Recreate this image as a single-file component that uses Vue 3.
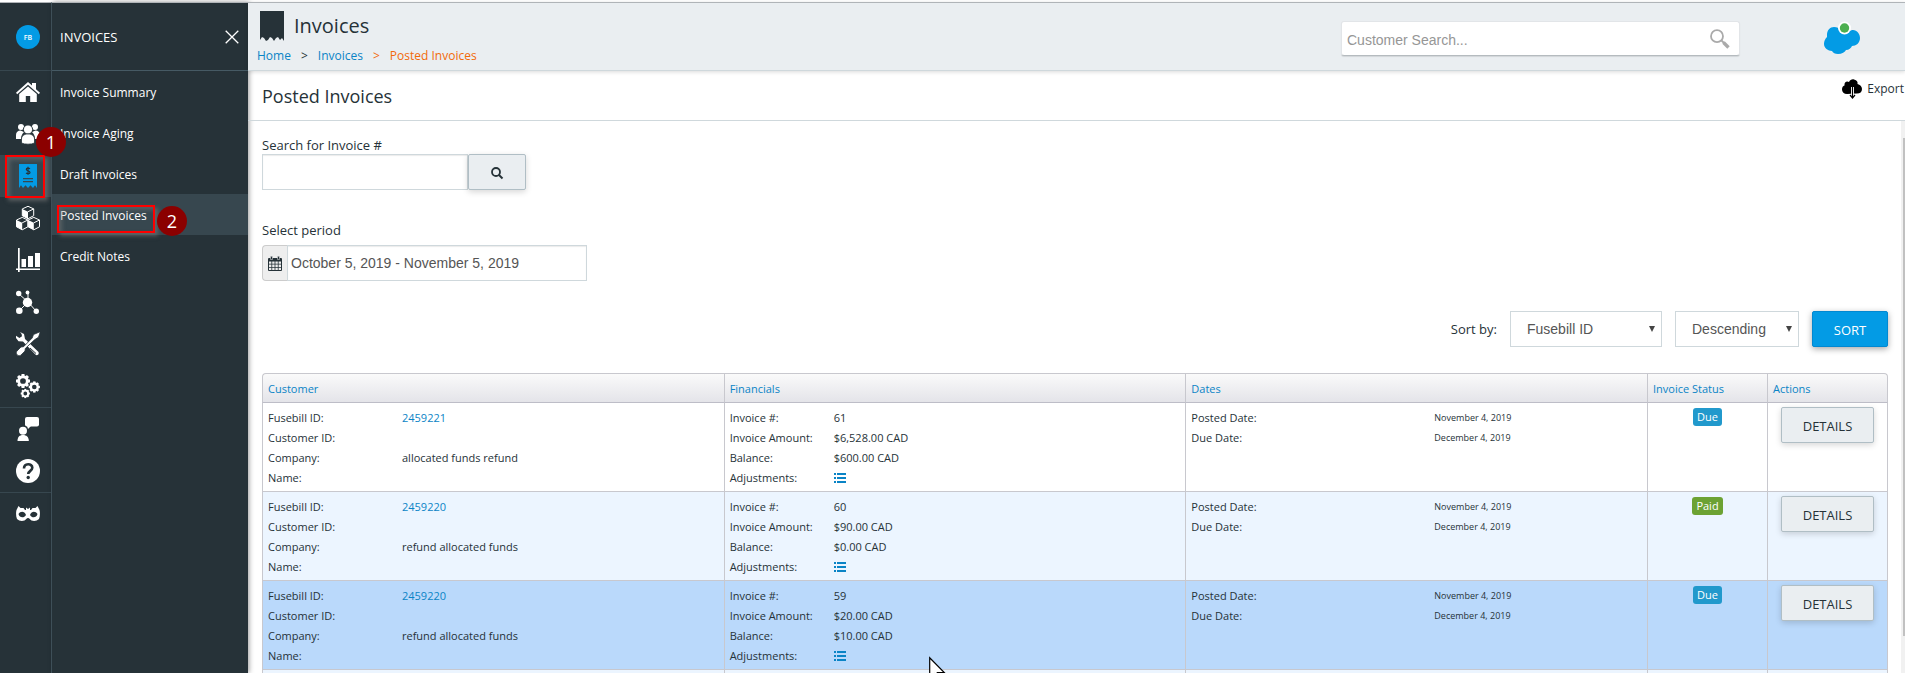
<template>
  <div class="app">
    <nav class="rail" aria-label="Main">
      <div class="rail-head"><span class="avatar">FB</span></div>
      <a
        v-for="item in railItems"
        :key="item.id"
        href="#"
        :class="['rail-item', { active: item.id === 'invoices', ruled: item.ruled }]"
        :title="item.label"
      >
        <svg width="24" height="24" viewBox="0 0 24 24" fill="#fff" v-html="item.icon" />
        <template v-if="item.id === 'invoices'">
          <span class="mark-box mark-box-rail" />
          <span class="mark-dot mark-dot-rail">1</span>
        </template>
      </a>
    </nav>

    <aside class="submenu">
      <div class="submenu-head">
        <span>INVOICES</span>
        <button class="close-btn" aria-label="Close menu">
          <svg width="14" height="14" viewBox="0 0 14 14" stroke="#fff" stroke-width="1.3"><path d="M.7.7l12.6 12.6M13.3.7L.7 13.3" /></svg>
        </button>
      </div>
      <a v-for="link in links" :key="link" href="#" :class="['submenu-item', { active: link === 'Posted Invoices' }]">
        {{ link }}
        <template v-if="link === 'Posted Invoices'">
          <span class="mark-box mark-box-menu" />
          <span class="mark-dot mark-dot-menu">2</span>
        </template>
      </a>
    </aside>

    <main class="main">
      <header class="topbar">
        <div>
          <div class="title">
            <svg width="24" height="31" viewBox="0 0 24 31" fill="#263238"><path d="M0 0h24v30l-2-3-2 2-2-3-2 1-2 3-2-3-2-1-2 3-2 1-2-3-2-1-2 3z" /></svg>
            <h1>Invoices</h1>
          </div>
          <div class="crumbs">
            <a href="#">Home</a><span>&gt;</span><a href="#">Invoices</a><span class="here">&gt;</span><span class="here">Posted Invoices</span>
          </div>
        </div>
        <div class="topbar-right">
          <div class="customer-search">
            <input type="text" placeholder="Customer Search..." aria-label="Customer search" />
            <svg width="20" height="20" viewBox="0 0 20 20" fill="none" stroke="#aaa"><circle cx="7" cy="7.2" r="6" stroke-width="1.8" /><path d="M11.5 11.5l2.5 2.5" stroke-width="1.8" /><path d="M13.5 13.5l5 5" stroke-width="3.4" /></svg>
          </div>
          <svg class="cloud" width="36" height="36" viewBox="0 0 36 36">
            <path fill="#039be5" d="M3 14c0-5 3-8 7-8 3 0 5 1 6 3 2-2 4-2 6-2 2 0 3 1 4 3 1-1 2-1 3-1 4 0 7 4 7 8 0 5-4 8-8 8-1 2-3 4-6 4-1 2-4 4-8 4-3 0-5-1-6-3C4 30 0 27 0 23c0-3 1-5 3-7z" />
            <circle cx="20.500" cy="7" r="6.500" fill="#fff" /><circle cx="20.500" cy="7" r="4.700" fill="#4caf50" />
          </svg>
        </div>
      </header>

      <div class="page-head">
        <h2>Posted Invoices</h2>
        <a href="#" class="export">
          <svg width="20" height="20" viewBox="0 0 20 20">
            <path d="M5 15C2 15 0 13 0 10.500 0 8 1 7 2.500 6.500 2 3 5 1.500 7 3c1-2 3-3 5-2.500 3 .5 4 2.500 3.500 4.500C18 5.500 20 7.500 20 10c0 3-2 4.500-5 4.500z" />
            <path d="M10.500 8v10M8 15.500l2.500 2.500 2.500-2.500" fill="none" stroke="#fff" stroke-width="3" />
            <path d="M10.500 8v10.500M8 16l2.500 3 2.500-3" fill="none" stroke="#000" stroke-width="1.200" />
          </svg>
          Export
        </a>
      </div>

      <div class="body">
        <div class="content">
          <label for="invoice-number">Search for Invoice #</label>
          <div class="group">
            <input id="invoice-number" class="number-input" type="text" />
            <button class="btn search-btn" aria-label="Search">
              <svg width="12" height="12" viewBox="0 0 12 12" fill="none" stroke="#263238"><circle cx="5" cy="5" r="4" stroke-width="1.800" /><path d="M8 8l3.500 3.500" stroke-width="2" /></svg>
            </button>
          </div>

          <label class="period-label" for="period">Select period</label>
          <div class="group">
            <span class="addon">
              <svg width="14" height="15" viewBox="0 0 14 15">
                <path fill="#263238" d="M0 3a1 1 0 0 1 1-1h12a1 1 0 0 1 1 1v11a1 1 0 0 1-1 1H1a1 1 0 0 1-1-1z" />
                <path fill="#eee" d="M1 5.500h2.400v2.300H1zM4.200 5.500h2.400v2.300H4.200zM7.400 5.500h2.400v2.300H7.400zM10.600 5.500H13v2.300h-2.400zM1 8.600h2.400v2.300H1zM4.200 8.600h2.400v2.300H4.200zM7.400 8.600h2.400v2.300H7.400zM10.600 8.600H13v2.300h-2.400zM1 11.700h2.400V14H1zM4.200 11.700h2.400V14H4.200zM7.400 11.700h2.400V14H7.400zM10.600 11.700H13V14h-2.400z" />
                <path fill="#263238" stroke="#eee" stroke-width=".5" d="M2.500.3h2v3.200h-2zM9.500.3h2v3.200h-2z" />
              </svg>
            </span>
            <input id="period" class="period-input" type="text" value="October 5, 2019 - November 5, 2019" />
          </div>

          <div class="sort-row">
            <label for="sort-field">Sort by:</label>
            <div class="select select-field">
              <select id="sort-field"><option>Fusebill ID</option></select>
              <svg width="6" height="6" viewBox="0 0 6 6" fill="#444"><path d="M0 0h6L3 6z" /></svg>
            </div>
            <div class="select select-order">
              <select aria-label="Sort order"><option>Descending</option></select>
              <svg width="6" height="6" viewBox="0 0 6 6" fill="#444"><path d="M0 0h6L3 6z" /></svg>
            </div>
            <button class="btn sort-btn">SORT</button>
          </div>

          <table class="invoices">
            <colgroup>
              <col /><col /><col /><col class="col-status" /><col class="col-actions" />
            </colgroup>
            <thead>
              <tr>
                <th v-for="h in headings" :key="h"><a href="#">{{ h }}</a></th>
              </tr>
            </thead>
            <tbody>
              <tr v-for="row in rows" :key="row.number" :class="row.tone">
                <td>
                  <dl class="customer">
                    <dt>Fusebill ID:</dt><dd><a href="#">{{ row.fusebillId }}</a></dd>
                    <dt>Customer ID:</dt><dd />
                    <dt>Company:</dt><dd>{{ row.company }}</dd>
                    <dt>Name:</dt><dd />
                  </dl>
                </td>
                <td>
                  <dl class="financials">
                    <dt>Invoice #:</dt><dd>{{ row.number }}</dd>
                    <dt>Invoice Amount:</dt><dd>{{ row.amount }}</dd>
                    <dt>Balance:</dt><dd>{{ row.balance }}</dd>
                    <dt>Adjustments:</dt>
                    <dd>
                      <a href="#" class="list-link" aria-label="Adjustments">
                        <svg width="12" height="10" viewBox="0 0 12 10" fill="#0a84c6"><path d="M0 0h2v2H0zM3 0h9v2H3zM0 4h2v2H0zM3 4h9v2H3zM0 8h2v2H0zM3 8h9v2H3z" /></svg>
                      </a>
                    </dd>
                  </dl>
                </td>
                <td>
                  <dl class="dates">
                    <dt>Posted Date:</dt><dd>November 4, 2019</dd>
                    <dt>Due Date:</dt><dd>December 4, 2019</dd>
                  </dl>
                </td>
                <td class="center"><span :class="['badge', row.status.toLowerCase()]">{{ row.status }}</span></td>
                <td class="center"><button class="btn details-btn">DETAILS</button></td>
              </tr>
              <tr class="alt next-row">
                <td v-for="n in 5" :key="n" />
              </tr>
            </tbody>
          </table>
        </div>
        <div class="scrollbar"><div class="thumb" /></div>
      </div>
    </main>

    <svg class="cursor" width="17" height="26" viewBox="0 0 17 26"><path d="M.7.8v20.500l4.700-4.500 3.200 7.500 3-1.300-3.200-7.300h7z" fill="#fff" stroke="#000" stroke-width="1.200" /></svg>
  </div>
</template>

<script setup>
const links = ['Invoice Summary', 'Invoice Aging', 'Draft Invoices', 'Posted Invoices', 'Credit Notes']
const headings = ['Customer', 'Financials', 'Dates', 'Invoice Status', 'Actions']

const rows = [
  { fusebillId: '2459221', company: 'allocated funds refund', number: 61, amount: '$6,528.00 CAD', balance: '$600.00 CAD', status: 'Due', tone: '' },
  { fusebillId: '2459220', company: 'refund allocated funds', number: 60, amount: '$90.00 CAD', balance: '$0.00 CAD', status: 'Paid', tone: 'alt' },
  { fusebillId: '2459220', company: 'refund allocated funds', number: 59, amount: '$20.00 CAD', balance: '$10.00 CAD', status: 'Due', tone: 'hovered' },
]

// ring of square teeth around a hollow hub
const gear = (x, y, r, w) => {
  let teeth = ''
  for (let i = 0; i < 8; i++) {
    teeth += `<rect x="${x - w / 2}" y="${y - r}" width="${w}" height="${w}" transform="rotate(${i * 45} ${x} ${y})"/>`
  }
  return `${teeth}<circle cx="${x}" cy="${y}" r="${r * 0.62}" fill="none" stroke="#fff" stroke-width="${r * 0.42}"/>`
}

// outlined box with a solid left face
const cube = (x, y) =>
  `<path d="M${x} ${y}l5.700 2.600v6.800l-5.700 3-5.700-3v-6.800z" fill="#263238" stroke="#fff" stroke-width="1"/><path d="M${x - 5.7} ${y + 2.6}l5.700 2.800v7l-5.700-3z"/><path d="M${x} ${y + 5.4}l5.700-2.800" stroke="#fff" stroke-width="1"/>`

const railItems = [
  { id: 'home', label: 'Home', icon: '<path d="M12 2l4 3.600V3h4v6.200l4 3.600-1.200 1.400L12 4.800 1.200 14.200 0 12.800z"/><path d="M3.200 14L12 6.400l8.800 7.600v8h-6.600v-6H9.800v6H3.200z"/>' },
  { id: 'customers', label: 'Customers', icon: '<circle cx="5" cy="5" r="3"/><circle cx="19" cy="5" r="3"/><path d="M0 17v-4c0-3 2-4.500 4.500-4.500L8 10c-2 2-3 4-3 7z"/><path d="M24 17v-4c0-3-2-4.500-4.500-4.500L16 10c2 2 3 4 3 7z"/><circle cx="12" cy="7.500" r="4.600" stroke="#263238"/><path d="M5.500 21v-4c0-3 2.500-5 6.500-5s6.500 2 6.500 5v4c-3 1.600-10 1.600-13 0z" stroke="#263238" stroke-width=".8"/>' },
  { id: 'invoices', label: 'Invoices', icon: '<path d="M3 0h18v24l-2-2.800-2 2.800-2.500-2.800L12 24l-2.500-2.800L7 24l-2-2.800L3 24z" fill="#039be5"/><path d="M14 4.700C13 3.800 10.300 3.700 10.300 5.400c0 1.700 3.700 1.100 3.700 3 0 1.600-2.700 1.700-4 .7M12 2.800v8" fill="none" stroke="#263238" stroke-width="1.200"/><path d="M7 14h10v1.300H7zM7 17h10v1.300H7z" fill="#37474f"/>' },
  { id: 'products', label: 'Products', icon: cube(12, 0.3) + cube(6.2, 11.4) + cube(17.8, 11.4) },
  { id: 'reports', label: 'Reports', icon: '<path d="M2 0h1.700v20.500H24V22H3.700v2H2v-2H0v-1.500h2z"/><path d="M5.500 11h4.500v8H5.500zM12 8h5v11h-5zM19 5h5v14h-5z"/>' },
  { id: 'network', label: 'Integrations', icon: '<g stroke="#fff" stroke-width="1"><path d="M3 4l9 8M12 3l0 9M3 21l9-9M20 21l-8-9"/></g><circle cx="2.700" cy="3.500" r="2.700"/><circle cx="11.500" cy="2.500" r="1.900"/><circle cx="11.500" cy="12.500" r="4.700"/><circle cx="3.300" cy="20.700" r="3.300"/><circle cx="20.300" cy="21.300" r="2.700"/>' },
  { id: 'tools', label: 'Tools', icon: '<path d="M4 0l4 2 1 5 13 12.500c2 2-.5 5-2.600 3L7 9.500 2.500 9.300 0 6V3.700L3.400 6 6 4.300 5.600 2z"/><path d="M14 16l6 5.500" stroke="#263238" stroke-width="1"/><path d="M23.500 0l.5.700-1.500 4.500-4 2.600L9.300 16.500 9 19l-4.200 4.200C2.500 25-1 22 .8 19.200L5 15l2.600-.3L16.200 6l1.300-3.500z" stroke="#263238" stroke-width=".8"/>' },
  { id: 'settings', label: 'Settings', icon: gear(7, 7, 7, 3) + gear(18.3, 13, 5.6, 2.4) + gear(9.3, 19.5, 4.6, 2), ruled: true },
  { id: 'contact', label: 'Contact', icon: '<rect x="9" y="0" width="14" height="9.500" rx="2"/><path d="M11 9h4l-3 3z"/><circle cx="7" cy="13.800" r="4"/><path d="M1.500 24c0-4 2-6 5.500-6s5.800 2 5.800 6z"/>' },
  { id: 'help', label: 'Help', icon: '<circle cx="12" cy="12" r="12"/><path d="M8 9.500C8 4 16.300 4 16.300 8.800c0 3-4.100 3.200-4.100 6.300" fill="none" stroke="#263238" stroke-width="2.600"/><circle cx="12.200" cy="18.500" r="1.700" fill="#263238"/>', ruled: true },
  { id: 'mask', label: 'Incognito', icon: '<path d="M2.500 4l2 2h3l1.500 2h1V5.500l2 1.500 2-1.500V8h1l1.500-2h3l2-2 2 4c.7 3 .6 6-.5 9-2 2-5 2.300-7.500 1.500C14 17.800 13.500 16 12 16s-2 1.800-3.500 2.500C6 19.300 3 19 1 17-.1 14-.2 11 .5 8z"/><path d="M2.500 12c2-3 6-3 7.500 1-2 3.400-6.500 3-7.500-1zM21.500 12c-2-3-6-3-7.500 1 2 3.400 6.500 3 7.500-1z" fill="#263238"/>' },
]
</script>

<style scoped>
.app {
  position: relative;
  display: flex;
  height: 100vh;
  box-sizing: border-box;
  padding-top: 2px;
  overflow: hidden;
  background: #fff;
  color: #263238;
  font-family: "Open Sans", "Noto Sans", sans-serif;
  font-size: 13px;
}
.app *,
.app *::before {
  box-sizing: border-box;
}
a {
  color: #0a84c6;
  text-decoration: none;
}
h1,
h2,
dl,
dd {
  margin: 0;
}
button,
input,
select {
  margin: 0;
  font-family: inherit;
}
svg {
  display: block;
  overflow: visible;
}

.rail {
  width: 52px;
  flex: none;
  background: #263238;
  border-top: 1px solid #b0b4b8;
  border-right: 1px solid #465a64;
}
.rail-head,
.submenu-head {
  height: 68px;
  border-bottom: 1px solid #37474f;
}
.rail-head {
  display: flex;
  align-items: center;
  padding-left: 16px;
}
.avatar {
  width: 24px;
  height: 24px;
  border-radius: 50%;
  background: #039be5;
  color: #fff;
  font-size: 7px;
  font-weight: 600;
  line-height: 26px;
  text-align: center;
}
.rail-item {
  position: relative;
  display: flex;
  align-items: center;
  height: 42px;
  padding-left: 16px;
}
.rail-item.active,
.submenu-item.active {
  background: #37474f;
}
.rail-item.ruled {
  height: 43px;
  border-bottom: 1px solid #37474f;
}

.submenu {
  width: 196px;
  flex: none;
  background: #263238;
  border-top: 1px solid #b0b4b8;
  box-shadow: 1px 0 5px rgba(0, 0, 0, 0.4);
}
.submenu-head {
  display: flex;
  align-items: center;
  justify-content: space-between;
  padding: 0 9px 0 8px;
  border-bottom-color: #465a64;
  color: #fff;
}
.close-btn {
  padding: 0;
  border: none;
  background: none;
}
.submenu-item {
  position: relative;
  display: flex;
  align-items: center;
  height: 41px;
  padding: 2px 0 0 8px;
  color: #fff;
  font-size: 12px;
}

.mark-box {
  position: absolute;
  z-index: 1;
  border: 2px solid #f00;
  box-shadow: 3px 3px 4px rgba(120, 120, 120, 0.6), inset 3px 3px 4px rgba(120, 120, 120, 0.5);
}
.mark-box-rail {
  left: 5px;
  top: 0;
  width: 40px;
  height: 43px;
}
.mark-box-menu {
  left: 5px;
  top: 11px;
  width: 98px;
  height: 28px;
}
.mark-dot {
  position: absolute;
  z-index: 2;
  width: 30px;
  height: 30px;
  border-radius: 50%;
  background: #8b0000;
  color: #fff;
  font-size: 18px;
  line-height: 30px;
  text-align: center;
}
.mark-dot-rail {
  left: 36px;
  top: -28px;
}
.mark-dot-menu {
  left: 105px;
  top: 12px;
}

.main {
  flex: 1;
  min-width: 0;
  display: flex;
  flex-direction: column;
}
.topbar {
  flex: none;
  display: flex;
  justify-content: space-between;
  height: 69px;
  padding: 8px 45px 0 9px;
  background: #eaeef1;
  border-top: 1px solid #b0b4b8;
  border-bottom: 1px solid #cfd8dc;
  box-shadow: 0 1px 4px rgba(0, 0, 0, 0.15);
}
.title {
  display: flex;
  gap: 10px;
  padding-left: 3px;
}
h1 {
  font-size: 20px;
  font-weight: 400;
  line-height: 30px;
}
.crumbs {
  display: flex;
  gap: 10px;
  font-size: 12px;
  line-height: 28px;
}
.here {
  color: #f26a0a;
}
.topbar-right {
  display: flex;
  align-items: flex-start;
  gap: 84px;
  padding-top: 10px;
}
.customer-search {
  position: relative;
}
.customer-search input {
  width: 399px;
  height: 35px;
  padding: 3px 40px 0 5px;
  border: 1px solid #e2e5e8;
  border-bottom: 1px solid #b5bbbf;
  border-radius: 3px;
  background: #fff;
  font-family: "Liberation Sans", sans-serif;
  font-size: 14px;
  box-shadow: 0 1px 1px rgba(0, 0, 0, 0.1);
}
.customer-search input::placeholder {
  color: #969696;
}
.customer-search svg {
  position: absolute;
  right: 10px;
  top: 8px;
}

.page-head {
  flex: none;
  display: flex;
  justify-content: space-between;
  height: 50px;
  padding-left: 14px;
  border-bottom: 1px solid #cfd8dc;
}
h2 {
  font-size: 18px;
  font-weight: 500;
  line-height: 51px;
}
.export {
  display: flex;
  gap: 5px;
  padding: 8px 1px 0 0;
  color: #263238;
  font-size: 12px;
  line-height: 20px;
}

.body {
  flex: 1;
  min-height: 0;
  display: flex;
}
.content {
  flex: 1;
  min-width: 0;
  overflow: hidden;
  padding: 15px 13px 0 14px;
}
label {
  display: block;
  line-height: 18px;
}
.group {
  display: flex;
}
.group input {
  height: 36px;
  border: 1px solid #cfd8dc;
  background: #fff;
  box-shadow: inset 0 1px 1px rgba(0, 0, 0, 0.08);
}
.number-input {
  width: 206px;
}
.btn {
  height: 36px;
  padding: 1px 0 0;
  border: 1px solid #b0bec5;
  border-radius: 2px;
  background: #eaeef1;
  color: #263238;
  font-size: 13px;
  box-shadow: 0 2px 6px rgba(0, 0, 0, 0.16);
}
.search-btn {
  display: flex;
  align-items: center;
  justify-content: center;
  width: 58px;
}
.period-label {
  margin-top: 31px;
  margin-bottom: 6px;
}
.addon {
  display: flex;
  align-items: center;
  justify-content: center;
  width: 25px;
  border: 1px solid #ccc;
  border-right: none;
  border-radius: 4px 0 0 4px;
  background: #eee;
}
.group .period-input {
  width: 300px;
  padding: 0 3px;
  color: #555;
  font-family: "Liberation Sans", sans-serif;
  font-size: 14px;
}

.sort-row {
  display: flex;
  align-items: center;
  justify-content: flex-end;
  gap: 13px;
  margin: 30px 0 26px;
}
.select {
  position: relative;
}
.select select {
  width: 100%;
  height: 36px;
  padding: 0 16px;
  border: 1px solid #cfd8dc;
  border-radius: 0;
  appearance: none;
  background: #fff;
  color: #555;
  font-family: "Liberation Sans", sans-serif;
  font-size: 14px;
}
.select svg {
  position: absolute;
  right: 7px;
  top: 15px;
}
.select-field {
  width: 152px;
}
.select-order {
  width: 124px;
}
.sort-btn {
  width: 76px;
  border-color: #0288d1;
  background: #039be5;
  color: #fff;
  box-shadow: 0 2px 6px rgba(0, 0, 0, 0.35);
}

.invoices {
  width: 100%;
  table-layout: fixed;
  border-collapse: separate;
  border-spacing: 0;
  font-size: 11px;
  line-height: 20px;
}
.col-status {
  width: 120px;
}
.col-actions {
  width: 121px;
}
th {
  height: 30px;
  padding: 2px 5px 0;
  border: 1px solid #c8c8ce;
  border-right: none;
  border-bottom-color: #bdbdc7;
  background: linear-gradient(#fafafa, #e4e4e9);
  font-weight: 400;
  text-align: left;
}
th:first-child {
  border-top-left-radius: 4px;
}
th:last-child {
  border-top-right-radius: 4px;
}
th:last-child,
td:last-child {
  border-right: 1px solid #c8c8ce;
}
td {
  height: 89px;
  padding: 5px 5px 0;
  border-left: 1px solid #c8c8ce;
  border-bottom: 1px solid #c8c8ce;
  vertical-align: top;
}
.alt td {
  background: #ecf5ff;
}
.hovered td {
  background: #bad9fb;
}
dl {
  display: grid;
  grid-auto-rows: 20px;
}
.customer {
  grid-template-columns: 134px 1fr;
}
.financials {
  grid-template-columns: 104px 1fr;
}
.dates {
  grid-template-columns: 243px 1fr;
}
.dates dd {
  font-size: 9px;
}
.list-link {
  display: block;
  padding-top: 5px;
}
.center {
  text-align: center;
}
.badge {
  display: inline-block;
  height: 18px;
  padding: 0 4px;
  border-radius: 3px;
  color: #fff;
  font-size: 11px;
  line-height: 18px;
  vertical-align: top;
}
.due {
  background: #2199cc;
}
.paid {
  background: #6ca233;
}
td.center:last-child {
  padding-top: 4px;
}
.details-btn {
  width: 93px;
  vertical-align: top;
}

.scrollbar {
  width: 4px;
  flex: none;
  padding: 17px 0 0 2px;
  background: #f1f1f1;
}
.thumb {
  height: 93%;
  background: #c1c1c1;
}

.cursor {
  position: absolute;
  left: 929px;
  top: 657px;
  z-index: 3;
}
</style>

<style>
body {
  margin: 0;
}
</style>
